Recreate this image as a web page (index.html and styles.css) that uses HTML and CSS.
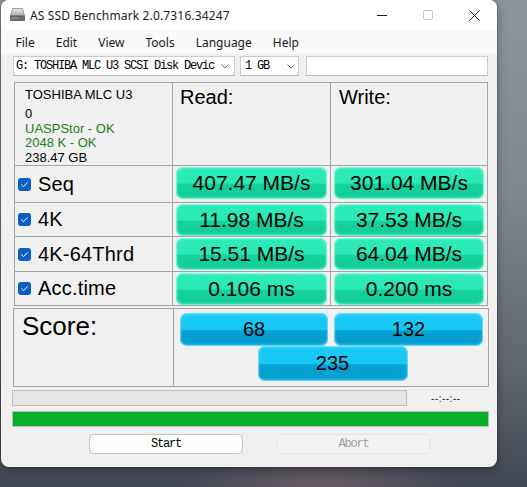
FILE: index.html
```html
<!DOCTYPE html>
<html>
<head>
<meta charset="utf-8">
<title>AS SSD Benchmark</title>
<link rel="stylesheet" href="styles.css">
</head>
<body>
<div class="window">
  <div class="titlebar">
    <svg class="app-icon" width="15" height="13" viewBox="0 0 15 13">
      <defs>
        <linearGradient id="g1" x1="0" y1="0" x2="0" y2="1">
          <stop offset="0" stop-color="#e8e8e8"/>
          <stop offset="1" stop-color="#a9a9a9"/>
        </linearGradient>
      </defs>
      <path d="M2.5 0.5 H12.5 L14.5 8 H0.5 Z" fill="url(#g1)" stroke="#8a8a8a" stroke-width="0.8"/>
      <rect x="0.5" y="8" width="14" height="4.5" fill="#6f6f6f" stroke="#555" stroke-width="0.8"/>
      <rect x="2" y="9.5" width="6" height="1.2" fill="#9c9c9c"/>
    </svg>
    <span class="title">AS SSD Benchmark 2.0.7316.34247</span>
    <div class="caption">
      <span class="cap-btn"><svg width="10" height="10" viewBox="0 0 10 10"><path d="M0 5.5 H10" stroke="#1b1b1b" stroke-width="1"/></svg></span>
      <span class="cap-btn"><svg width="10" height="10" viewBox="0 0 10 10"><rect x="0.5" y="0.5" width="9" height="9" rx="1" fill="none" stroke="#c4c4c4" stroke-width="1"/></svg></span>
      <span class="cap-btn"><svg width="11" height="11" viewBox="0 0 11 11"><path d="M0.5 0.5 L10.5 10.5 M10.5 0.5 L0.5 10.5" stroke="#1b1b1b" stroke-width="1"/></svg></span>
    </div>
  </div>
  <div class="menubar">
    <span class="menu-item">File</span>
    <span class="menu-item">Edit</span>
    <span class="menu-item">View</span>
    <span class="menu-item">Tools</span>
    <span class="menu-item">Language</span>
    <span class="menu-item">Help</span>
  </div>
  <div class="content">
    <div class="toolbar">
      <div class="combo drive">
        <span class="combo-text">G: TOSHIBA MLC U3 SCSI Disk Devic</span>
        <svg class="chev" width="8" height="5" viewBox="0 0 8 5"><path d="M0.5 0.5 L4 4 L7.5 0.5" fill="none" stroke="#6a6a6a" stroke-width="1"/></svg>
      </div>
      <div class="combo size">
        <span class="combo-text">1 GB</span>
        <svg class="chev" width="8" height="5" viewBox="0 0 8 5"><path d="M0.5 0.5 L4 4 L7.5 0.5" fill="none" stroke="#6a6a6a" stroke-width="1"/></svg>
      </div>
      <div class="textbox"></div>
    </div>

    <div class="results">
      <div class="cell info">
        <div class="info-name">TOSHIBA MLC U3</div>
        <div>0</div>
        <div class="ok">UASPStor - OK</div>
        <div class="ok">2048 K - OK</div>
        <div>238.47 GB</div>
      </div>
      <div class="cell head">Read:</div>
      <div class="cell head write">Write:</div>

      <div class="cell label"><span class="check"><svg width="13" height="13" viewBox="0 0 13 13"><path d="M3.3 6.6 L5.5 8.7 L9.7 4.4" fill="none" stroke="#ffffff" stroke-width="1"/></svg></span>Seq</div>
      <div class="cell val"><div class="pill green">407.47 MB/s</div></div>
      <div class="cell val"><div class="pill green">301.04 MB/s</div></div>

      <div class="cell label"><span class="check"><svg width="13" height="13" viewBox="0 0 13 13"><path d="M3.3 6.6 L5.5 8.7 L9.7 4.4" fill="none" stroke="#ffffff" stroke-width="1"/></svg></span>4K</div>
      <div class="cell val"><div class="pill green">11.98 MB/s</div></div>
      <div class="cell val"><div class="pill green">37.53 MB/s</div></div>

      <div class="cell label"><span class="check"><svg width="13" height="13" viewBox="0 0 13 13"><path d="M3.3 6.6 L5.5 8.7 L9.7 4.4" fill="none" stroke="#ffffff" stroke-width="1"/></svg></span>4K-64Thrd</div>
      <div class="cell val"><div class="pill green">15.51 MB/s</div></div>
      <div class="cell val"><div class="pill green">64.04 MB/s</div></div>

      <div class="cell label"><span class="check"><svg width="13" height="13" viewBox="0 0 13 13"><path d="M3.3 6.6 L5.5 8.7 L9.7 4.4" fill="none" stroke="#ffffff" stroke-width="1"/></svg></span>Acc.time</div>
      <div class="cell val"><div class="pill green">0.106 ms</div></div>
      <div class="cell val"><div class="pill green">0.200 ms</div></div>
    </div>

    <div class="score">
      <div class="cell score-label">Score:</div>
      <div class="cell score-vals">
        <div class="pill blue">68</div>
        <div class="pill blue">132</div>
        <div class="pill blue total">235</div>
      </div>
    </div>

    <div class="progress-row">
      <div class="bar bar-gray"></div>
      <span class="time">--:--:--</span>
    </div>
    <div class="bar bar-green"></div>

    <div class="buttons">
      <button class="btn">Start</button>
      <button class="btn btn-disabled">Abort</button>
    </div>
  </div>
</div>
</body>
</html>
```

FILE: styles.css
```css
html, body {
  margin: 0;
  padding: 0;
}

body {
  width: 527px;
  height: 487px;
  overflow: hidden;
  font-family: "Liberation Sans", Arial, sans-serif;
  background:
    radial-gradient(ellipse 140px 40px at 320px 490px, rgba(140, 105, 115, 0.55), transparent),
    linear-gradient(180deg, #8a949d 0%, #7d8790 40%, #60666f 75%, #414854 100%);
}

.window {
  margin-left: 1px;
  width: 496px;
  height: 467px;
  background: #f0f0f0;
  border-radius: 8px;
  overflow: hidden;
  box-shadow: 0 0 0 1px rgba(0, 0, 0, 0.12), 0 3px 10px rgba(0, 0, 0, 0.35);
}

/* Title bar */
.titlebar {
  height: 30px;
  background: #ffffff;
  display: flex;
  align-items: center;
}

.app-icon {
  margin-left: 9px;
  margin-top: -1px;
}

.title {
  margin-left: 5px;
  font-family: "Noto Sans", "Open Sans", sans-serif;
  font-size: 12px;
  letter-spacing: 0.15px;
  color: #1a1a1a;
}

.caption {
  margin-left: auto;
  display: flex;
  height: 30px;
}

.cap-btn {
  width: 46px;
  display: flex;
  align-items: center;
  justify-content: center;
}

/* Menu bar */
.menubar {
  height: 24px;
  background: #f9f9f9;
  display: flex;
  align-items: center;
  padding-left: 4px;
  font-family: "Noto Sans", "Open Sans", sans-serif;
  font-size: 12px;
  color: #1a1a1a;
}

.menu-item {
  padding: 0 10.5px;
}

/* Content */
.content {
  padding: 2px 0 0 12px;
}

.toolbar {
  display: flex;
  height: 20px;
}

.combo {
  box-sizing: border-box;
  height: 20px;
  background: #ffffff;
  border: 1px solid #cdcdcd;
  border-bottom-color: #b9b9b9;
  display: flex;
  align-items: center;
}

.combo-text {
  font-family: "Liberation Mono", "Courier New", monospace;
  font-size: 12px;
  letter-spacing: -1.2px;
  color: #000;
  white-space: nowrap;
}

.chev {
  margin-left: auto;
}

.drive {
  width: 222px;
  padding-left: 2px;
}

.drive .chev {
  margin-right: 5px;
}

.size {
  width: 59px;
  margin-left: 5px;
  padding-left: 4px;
}

.size .chev {
  margin-right: 3px;
}

.textbox {
  box-sizing: border-box;
  width: 182px;
  height: 20px;
  margin-left: 7px;
  background: #ffffff;
  border: 1px solid #cdcdcd;
  border-bottom-color: #b9b9b9;
}

/* Results table */
.results {
  margin-top: 6px;
  margin-left: 1px;
  display: grid;
  grid-template-columns: 157px 157px 156px;
  grid-template-rows: 82px 36px 33px 34px 33px;
  gap: 1px;
  padding: 1px;
  width: 472px;
  background: #a3a3a3;
}

.cell {
  background: #f0f0f0;
  color: #000;
  overflow: hidden;
}

.info {
  padding: 4.5px 0 0 10px;
  font-size: 13px;
  line-height: 14.7px;
}

.info-name {
  margin-bottom: 4.6px;
}

.ok {
  color: #1e7d1e;
}

.head {
  padding: 1.5px 0 0 7px;
  font-size: 20px;
  line-height: 24px;
}

.head.write {
  padding-left: 8px;
}

.label {
  display: flex;
  align-items: center;
  font-size: 20px;
  letter-spacing: 0.2px;
}

.check {
  width: 13px;
  height: 13px;
  margin-left: 3px;
  margin-right: 7px;
  background: #0a5fc2;
  border-radius: 3px;
  display: flex;
}

.val {
  padding: 1px 3px 0;
}

.pill {
  box-sizing: border-box;
  height: 32px;
  border-radius: 7px;
  display: flex;
  align-items: center;
  justify-content: center;
  color: #000;
}

.green {
  font-size: 21px;
  background: linear-gradient(180deg, #45f3cb 0%, #2deab9 8%, #2be8b7 50%, #15d39d 54%, #12cd98 88%, #27deaf 100%);
  box-shadow: inset 0 0 0 1px rgba(150, 255, 225, 0.55), inset 0 0 3px 1px rgba(120, 250, 215, 0.5);
}

/* Score table */
.score {
  margin-top: 2px;
  display: grid;
  grid-template-columns: 159px 314px;
  grid-template-rows: 77px;
  gap: 1px;
  padding: 1px;
  width: 474px;
  background: #a3a3a3;
}

.score-label {
  padding: 2.3px 0 0 8px;
  font-size: 26px;
  line-height: 30px;
}

.score-vals {
  display: grid;
  grid-template-columns: 148px 149px;
  grid-template-rows: 33px 35px;
  column-gap: 6px;
  padding: 4px 0 0 6px;
}

.blue {
  height: auto;
  font-size: 20px;
  background: linear-gradient(180deg, #33d6fb 0%, #1bcbf6 8%, #16c6f3 50%, #05a2d3 54%, #049dcd 88%, #12b4e4 100%);
  box-shadow: inset 0 0 0 1px rgba(140, 225, 255, 0.55), inset 0 0 3px 1px rgba(110, 215, 250, 0.5);
}

.total {
  grid-column: 1 / 3;
  justify-self: center;
  width: 150px;
  margin-left: 2px;
}

/* Progress */
.progress-row {
  margin-top: 3px;
  margin-left: -1px;
  display: flex;
  align-items: center;
  height: 16px;
}

.bar {
  box-sizing: border-box;
  height: 16px;
  border: 1px solid #bcbcbc;
}

.bar-gray {
  width: 395px;
  background: #e5e5e5;
}

.time {
  margin-left: 24px;
  font-size: 10px;
  letter-spacing: 0.5px;
  color: #222;
}

.bar-green {
  margin-top: 5px;
  margin-left: -1px;
  width: 477px;
  background: #06b02b;
}

/* Buttons */
.buttons {
  margin-top: 7px;
  margin-left: 76px;
  display: flex;
  gap: 34px;
}

.btn {
  box-sizing: border-box;
  width: 154px;
  height: 20px;
  padding: 0;
  background: #fcfcfc;
  border: 1px solid #c3c3c3;
  border-radius: 4px;
  font-family: "Liberation Mono", "Courier New", monospace;
  font-size: 12px;
  letter-spacing: -1.2px;
  color: #000;
}

.btn-disabled {
  width: 153px;
  background: #f3f3f3;
  border-color: #e3e3e3;
  color: #a0a0a0;
}
```
